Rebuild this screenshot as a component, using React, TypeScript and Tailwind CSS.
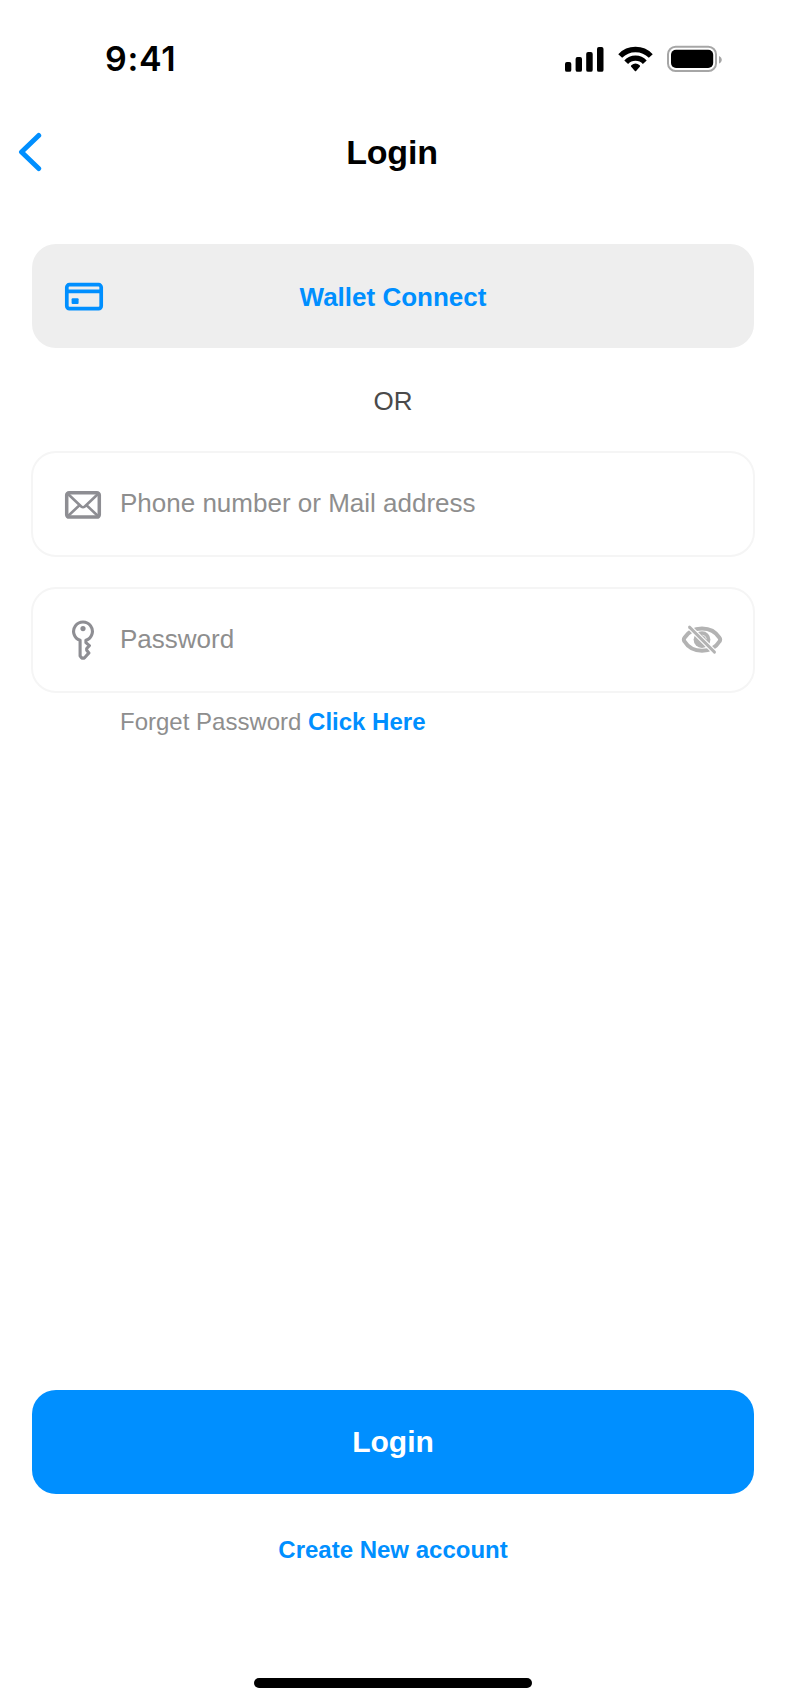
import type { ReactNode } from 'react';

function StatusIcons() {
  return (
    <svg width="160" height="30" viewBox="564 44 160 30" fill="none">
      <g fill="#000">
        <rect x="565" y="62" width="6.3" height="9.8" rx="1.9" />
        <rect x="575.6" y="57" width="6.4" height="14.8" rx="1.9" />
        <rect x="586.2" y="52" width="6.5" height="19.8" rx="1.9" />
        <rect x="597" y="47" width="6.5" height="24.8" rx="1.9" />
        <path d="M631.2 66.7a1 1 0 0 1 .1-1.4 6.600 6.600 0 0 1 8.400 0 1 1 0 0 1 .1 1.4l-3.700 4.300a.8.8 0 0 1-1.2 0z" />
      </g>
      <path d="M620.200 56a21.200 21.200 0 0 1 30.600 0" stroke="#000" strokeWidth="5.400" />
      <path d="M626.200 62.200a12.800 12.800 0 0 1 18.600 0" stroke="#000" strokeWidth="5.200" />
      <rect x="668" y="46.7" width="48" height="24.3" rx="7.6" stroke="#a6a6a6" strokeWidth="2" />
      <rect x="671" y="49.7" width="42.2" height="18.3" rx="5" fill="#000" />
      <path d="M719 56v7.6c1.600-.7 2.800-2.200 2.800-3.800s-1.200-3.100-2.800-3.800z" fill="#a6a6a6" />
    </svg>
  );
}

function CardIcon() {
  return (
    <svg width="40" height="30" viewBox="64 282 40 30" fill="none">
      <rect x="66.800" y="284.700" width="34.400" height="24" rx="2.600" stroke="#008fff" strokeWidth="3.700" />
      <path d="M66 291.400h36" stroke="#008fff" strokeWidth="3.700" />
      <rect x="71.600" y="298.200" width="7" height="5.800" rx="1" fill="#008fff" />
    </svg>
  );
}

function MailIcon() {
  return (
    <svg width="38" height="30" viewBox="64 490 38 30" fill="none" stroke="#8e8e93">
      <rect x="66.700" y="492.700" width="32.600" height="24.400" rx="2.400" strokeWidth="3.500" />
      <path d="M67.500 493.500l13.700 13q1.800 1.500 3.600 0l13.700-13M67.500 516.500l11.700-11M98.500 516.500l-11.700-11" strokeWidth="2.600" />
    </svg>
  );
}

function KeyIcon() {
  return (
    <svg width="38" height="40" viewBox="64 620 38 40" fill="none" stroke="#8e8e93" strokeWidth="3.100" strokeLinejoin="round">
      <path d="M80.100 640.300a9.400 9.400 0 1 1 5.800 0v2.300l3.500 3-2.700 2.900v1.700l2.200 2.700-4.100 4.600q-1.800 1.500-3.500 0l-1.200-1.400z" />
      <circle cx="83" cy="628.600" r="2.600" fill="#8e8e93" stroke="none" />
    </svg>
  );
}

function EyeOffIcon() {
  return (
    <svg width="42" height="30" viewBox="681 625 42 30" fill="none">
      <path d="M684.400 641.300q-1.100-1.700 0-3.400c3.600-5.900 10.200-9.500 17.600-9.500s14 3.600 17.600 9.500q1.100 1.700 0 3.400c-3.600 5.900-10.200 9.500-17.600 9.500s-14-3.600-17.600-9.500z" stroke="#b3b3b3" strokeWidth="4" strokeLinejoin="round" />
      <circle cx="702" cy="639.600" r="8.400" fill="#b3b3b3" />
      <path d="M702.800 635.200a4.200 4.200 0 0 1 3.600 3.600" stroke="#fff" strokeWidth=".7" strokeLinecap="round" />
      <path d="M687 624.600l30 30" stroke="#fff" strokeWidth="5.200" />
      <path d="M689.500 627.100l25 25" stroke="#b3b3b3" strokeWidth="2.900" strokeLinecap="round" />
    </svg>
  );
}

function Field({ icon, label, trailing }: { icon: ReactNode; label: string; trailing?: ReactNode }) {
  return (
    <div className="flex h-[106px] items-center rounded-[25px] border-2 border-[#f5f5f5] pr-[30px] pl-[31px]">
      <div className="flex w-[38px] shrink-0">{icon}</div>
      <span className="flex-1 pb-[3px] pl-[18px] text-[26px] leading-[30px] text-[#8e8e8e]">{label}</span>
      {trailing}
    </div>
  );
}

export default function App() {
  return (
    <div className="flex h-[1704px] w-[786px] flex-col bg-white font-['Liberation_Sans',Arial,sans-serif]">
      <div className="flex h-[104px] items-start justify-between pt-[44px] pr-[62px] pl-[105px]">
        <span className="font-['Inter',sans-serif] text-[34px] leading-[30px] font-semibold tracking-[0.7px] text-black">9:41</span>
        <StatusIcons />
      </div>

      <header className="grid h-24 grid-cols-3 items-center pl-[18px] pr-[20px]">
        <svg width="26" height="42" viewBox="18 131 26 42" fill="none">
          <path d="M38.700 135.500l-17.200 16.500 17.200 16.500" stroke="#008fff" strokeWidth="5" strokeLinecap="round" strokeLinejoin="round" />
        </svg>
        <h1 className="text-center text-[34px] leading-[40px] font-bold tracking-[-0.2px] text-black">Login</h1>
      </header>

      <main className="flex flex-1 flex-col px-[31px] pt-[44px]">
        <button className="mx-px grid h-[104px] grid-cols-[40px_1fr_40px] items-center rounded-[24px] bg-[#eee] px-8">
          <div className="flex pt-[2px]">
            <CardIcon />
          </div>
          <span className="pt-[2px] text-center text-[26px] leading-[30px] font-bold text-[#008fff]">Wallet Connect</span>
        </button>
        <p className="h-[103px] pt-[38px] text-center text-[26px] leading-[30px] text-[#4a4a4a]">OR</p>
        <div className="flex flex-col gap-[30px]">
          <Field
            icon={
              <div className="flex pt-[2px]">
                <MailIcon />
              </div>
            }
            label="Phone number or Mail address"
          />
          <Field icon={<KeyIcon />} label="Password" trailing={<EyeOffIcon />} />
        </div>
        <p className="pt-[14px] pl-[89px] text-[24px] leading-[30px] text-[#8e8e8e]">
          Forget Password <a className="font-bold text-[#008fff]">Click Here</a>
        </p>
      </main>

      <footer className="flex h-[314px] flex-col items-center px-8">
        <button className="h-[104px] w-full rounded-[24px] bg-[#008fff] text-[30px] leading-[34px] font-bold text-white">Login</button>
        <a className="mt-[41px] text-[24px] leading-[30px] font-bold text-[#008fff]">Create New account</a>
        <div className="mt-auto mb-4 h-[10px] w-[278px] rounded-full bg-black" />
      </footer>
    </div>
  );
}
